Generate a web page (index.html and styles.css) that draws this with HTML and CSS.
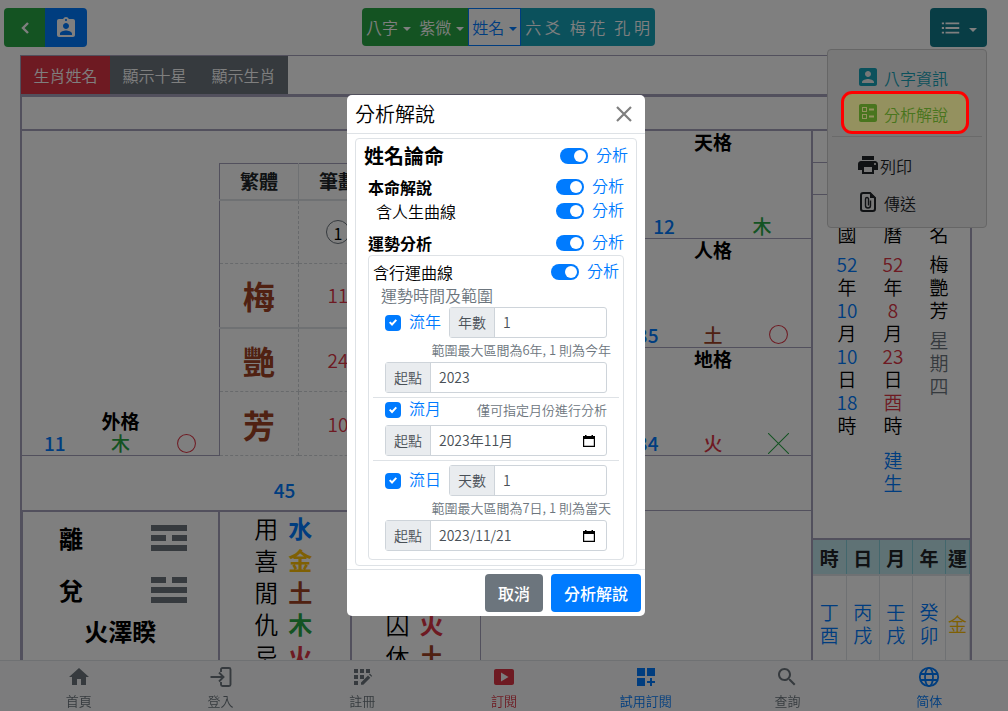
FILE: index.html
```html
<!DOCTYPE html>
<html lang="zh-Hant">
<head>
<meta charset="utf-8">
<meta name="viewport" content="width=device-width, initial-scale=1">
<title>分析解說</title>
<link rel="stylesheet" href="styles.css">
</head>
<body>
<header class="topbar">
  <div class="group tall">
    <button class="btn-back" type="button" aria-label="返回"><svg class="icon" viewBox="0 0 24 24"><path d="M15 7l-5 5 5 5" fill="none" stroke="currentColor" stroke-width="2.4"/></svg></button>
    <button class="btn-badge" type="button" aria-label="個人資料"><svg class="icon" viewBox="0 0 24 24"><path d="M19 3h-4.18C14.4 1.84 13.3 1 12 1c-1.3 0-2.4.84-2.82 2H5c-1.1 0-2 .9-2 2v14c0 1.1.9 2 2 2h14c1.1 0 2-.9 2-2V5c0-1.1-.9-2-2-2zm-7 0c.55 0 1 .45 1 1s-.45 1-1 1-1-.45-1-1 .45-1 1-1zm0 4c1.66 0 3 1.34 3 3s-1.34 3-3 3-3-1.34-3-3 1.34-3 3-3zm6 12H6v-1.4c0-2 4-3.1 6-3.1s6 1.1 6 3.1V19z"/></svg></button>
  </div>
  <nav class="group methods">
    <button class="m-green" type="button">八字<i class="caret"></i></button>
    <button class="m-green" type="button">紫微<i class="caret"></i></button>
    <button class="m-active" type="button">姓名<i class="caret"></i></button>
    <button class="m-info" type="button">六 爻</button>
    <button class="m-info" type="button">梅 花</button>
    <button class="m-info" type="button">孔 明</button>
  </nav>
  <div class="dropdown">
    <button class="btn-menu" type="button" aria-label="選單"><svg class="icon" viewBox="0 0 24 24"><path d="M2 6h2.4v2H2zM6 6h15v2H6zM2 11h2.4v2H2zM6 11h15v2H6zM2 16h2.4v2H2zM6 16h15v2H6z"/></svg><i class="caret"></i></button>
    <div class="menu">
      <a class="menu-item info" href="#"><svg class="icon" viewBox="0 0 24 24"><path d="M3 5v14c0 1.1.89 2 2 2h14c1.1 0 2-.9 2-2V5c0-1.1-.9-2-2-2H5c-1.11 0-2 .9-2 2zm12 4c0 1.66-1.34 3-3 3s-3-1.34-3-3 1.34-3 3-3 3 1.34 3 3zm-9 8c0-2 4-3.1 6-3.1s6 1.1 6 3.1v1H6v-1z"/></svg><span>八字資訊</span></a>
      <a class="menu-item success" href="#"><svg class="icon" viewBox="0 0 24 24"><path d="M13 9.5h5v-2h-5v2zm0 7h5v-2h-5v2zm6 4.5H5c-1.1 0-2-.9-2-2V5c0-1.1.9-2 2-2h14c1.1 0 2 .9 2 2v14c0 1.1-.9 2-2 2zM6 11h5V6H6v5zm1-4h3v3H7V7zM6 18h5v-5H6v5zm1-4h3v3H7v-3z"/></svg><span>分析解說</span></a>
      <hr>
      <a class="menu-item plain print" href="#"><svg class="icon" viewBox="0 0 24 24"><path d="M19 8H5c-1.66 0-3 1.34-3 3v6h4v4h12v-4h4v-6c0-1.66-1.34-3-3-3zm-3 11H8v-5h8v5zm3-7c-.55 0-1-.45-1-1s.45-1 1-1 1 .45 1 1-.45 1-1 1zm-1-9H6v4h12V3z"/></svg><span>列印</span></a>
      <a class="menu-item plain" href="#"><svg class="icon" viewBox="0 0 24 24"><path d="M14 3H7.2C6 3 5 4 5 5.200v13.600C5 20 6 21 7.200 21h9.600c1.200 0 2.200-1 2.200-2.200V8z" fill="none" stroke="currentColor" stroke-width="2"/><path d="M14 2v6h6z"/><path d="M14.500 10.500v5a2.500 2.500 0 0 1-5 0V9a1.500 1.500 0 0 1 3 0v6.500" fill="none" stroke="currentColor" stroke-width="1.400"/></svg><span>傳送</span></a>
    </div>
  </div>
</header>

<main class="frame">
  <div class="tabs">
    <button class="tab on" type="button">生肖姓名</button>
    <button class="tab" type="button">顯示十星</button>
    <button class="tab" type="button">顯示生肖</button>
  </div>
  <div class="strip"></div>
  <div class="board">
    <section class="left">
      <div class="upper">
        <div class="cell outer">
          <h2>外格</h2>
          <div class="vals"><b class="blue">11</b><b class="green">木</b><span class="mark"><svg viewBox="0 0 20 20"><circle cx="10" cy="10" r="8.500" fill="none" stroke="#dc3545"/></svg></span></div>
        </div>
        <table class="names">
          <thead><tr><th>繁體</th><th>筆劃</th><th></th><th></th><th></th></tr></thead>
          <tbody>
            <tr><td></td><td><span class="ring">1</span></td><td></td><td></td><td></td></tr>
            <tr class="mid"><td class="name">梅</td><td class="red">11</td><td></td><td></td><td></td></tr>
            <tr><td class="name">艷</td><td class="red">24</td><td></td><td></td><td></td></tr>
            <tr><td class="name">芳</td><td class="red">10</td><td></td><td></td><td></td></tr>
          </tbody>
        </table>
        <div class="stack">
          <div class="cell"><h2>天格</h2><div class="vals"><b class="blue">12</b><b class="green">木</b></div></div>
          <div class="cell"><h2>人格</h2><div class="vals"><b class="blue">35</b><b class="brown">土</b><span class="mark"><svg viewBox="0 0 20 20"><circle cx="10" cy="10" r="8.500" fill="none" stroke="#dc3545"/></svg></span></div></div>
          <div class="cell"><h2>地格</h2><div class="vals"><b class="blue">34</b><b class="red">火</b><span class="mark"><svg viewBox="0 0 20 20"><path d="M0 0L20 20M20 0L0 20" stroke="#28a745"/></svg></span></div></div>
        </div>
      </div>
      <div class="total"><b class="blue">45</b></div>
      <div class="lower">
        <div class="hexagram">
          <div class="gua"><b>離</b><svg viewBox="0 0 36 26"><path d="M0 0h36v6H0zM0 10h15v6H0zM21 10h15v6H21zM0 20h36v6H0z"/></svg></div>
          <div class="gua"><b>兌</b><svg viewBox="0 0 36 26"><path d="M0 0h15v6H0zM21 0h15v6H21zM0 10h36v6H0zM0 20h36v6H0z"/></svg></div>
          <b class="gua-name">火澤睽</b>
        </div>
        <div class="pairs">
          <div><span>用</span><b class="blue">水</b></div>
          <div><span>喜</span><b class="gold">金</b></div>
          <div><span>閒</span><b class="brown">土</b></div>
          <div><span>仇</span><b class="green">木</b></div>
          <div><span>忌</span><b class="red">火</b></div>
        </div>
        <div class="pairs last">
          <div><span>旺</span><b class="blue">水</b></div>
          <div><span>相</span><b class="green">木</b></div>
          <div><span>死</span><b class="gold">金</b></div>
          <div><span>囚</span><b class="red">火</b></div>
          <div><span>休</span><b class="brown">土</b></div>
        </div>
        <div class="rest"></div>
      </div>
    </section>
    <section class="right">
      <div class="line"></div>
      <div class="line"></div>
      <div class="dates">
        <p><span>民</span><span>國</span><span class="blue gap">52</span><span>年</span><span class="blue">10</span><span>月</span><span class="blue">10</span><span>日</span><span class="blue">18</span><span>時</span></p>
        <p><span>農</span><span>曆</span><span class="red gap">52</span><span>年</span><span class="red">8</span><span>月</span><span class="red">23</span><span>日</span><span class="red">酉</span><span>時</span><span class="blue gap born">建</span><span class="blue">生</span></p>
        <p><span>姓</span><span>名</span><span class="gap">梅</span><span>艷</span><span>芳</span><span class="gray gap">星</span><span class="gray">期</span><span class="gray">四</span></p>
      </div>
      <table class="pillars">
        <thead><tr><th>時</th><th>日</th><th>月</th><th>年</th><th class="luck">運</th></tr></thead>
        <tbody><tr><td>丁<br>酉</td><td>丙<br>戌</td><td>壬<br>戌</td><td>癸<br>卯</td><td class="gold">金</td></tr></tbody>
      </table>
    </section>
  </div>
</main>

<nav class="bottombar">
  <a href="#"><svg class="icon" viewBox="0 0 24 24"><path d="M10 20v-6h4v6h5v-8h3L12 3 2 12h3v8z"/></svg>首頁</a>
  <a href="#"><svg class="icon" viewBox="0 0 24 24"><path d="M12 7V4.500C12 3.700 12.700 3 13.500 3H20c.8 0 1.500.7 1.500 1.500v15c0 .8-.7 1.500-1.500 1.500h-6.500c-.8 0-1.500-.7-1.500-1.500V17M1.500 12H14M10 7.500l4.500 4.500-4.500 4.500" fill="none" stroke="currentColor" stroke-width="1.900"/></svg>登入</a>
  <a href="#"><svg class="icon" viewBox="0 0 24 24"><path d="M4 4h4v4H4zM10 4h4v4h-4zM16 4h4v4h-4zM4 10h4v4H4zM10 10h4v4h-4zM4 16h4v4H4zM11 17.500l7-7 2.300 2.300-7 7H11zM19 9.500l.9-.9 2.300 2.300-.9.9z"/></svg>註冊</a>
  <a href="#" class="red"><svg class="icon" viewBox="0 0 24 24"><path fill-rule="evenodd" d="M4 4h16c1.100 0 2 .9 2 2v12c0 1.100-.9 2-2 2H4c-1.100 0-2-.9-2-2V6c0-1.100.9-2 2-2zm5 3.500v9l7.500-4.500z"/></svg>訂閱</a>
  <a href="#" class="blue"><svg class="icon" viewBox="0 0 24 24"><path d="M3 3h8v8H3zM13 3h8v8h-8zM3 13h8v8H3zM16 13h2v3h3v2h-3v3h-2v-3h-3v-2h3z"/></svg>試用訂閱</a>
  <a href="#"><svg class="icon" viewBox="0 0 24 24"><path d="M15.500 14h-.79l-.28-.27C15.410 12.590 16 11.110 16 9.500 16 5.910 13.090 3 9.500 3S3 5.910 3 9.500 5.910 16 9.500 16c1.610 0 3.090-.59 4.230-1.570l.27.28v.79l5 4.990L20.490 19l-4.990-5zm-6 0C7.010 14 5 11.990 5 9.500S7.010 5 9.500 5 14 7.010 14 9.500 11.990 14 9.500 14z"/></svg>查詢</a>
  <a href="#" class="blue"><svg class="icon" viewBox="0 0 24 24"><g fill="none" stroke="currentColor" stroke-width="1.800"><circle cx="12" cy="12" r="9.200"/><ellipse cx="12" cy="12" rx="4" ry="9.200"/><path d="M3.500 9h17M3.500 15h17"/></g></svg>简体</a>
</nav>

<div class="backdrop">
  <section class="modal" role="dialog" aria-labelledby="modal-title">
    <header class="modal-head">
      <h1 id="modal-title">分析解說</h1>
      <button class="close" type="button" aria-label="關閉"><svg viewBox="0 0 18 18"><path d="M2 2l14 14M16 2L2 16" stroke="currentColor" stroke-width="2.200"/></svg></button>
    </header>
    <div class="modal-body">
      <div class="box">
        <div class="row lead"><strong>姓名論命</strong><label class="toggle"><input type="checkbox" checked><span>分析</span></label></div>
        <div class="row"><strong>本命解說</strong><label class="toggle"><input type="checkbox" checked><span>分析</span></label></div>
        <div class="row sub"><span>含人生曲線</span><label class="toggle"><input type="checkbox" checked><span>分析</span></label></div>
        <div class="row spaced"><strong>運勢分析</strong><label class="toggle"><input type="checkbox" checked><span>分析</span></label></div>
        <div class="inner">
          <div class="row"><span>含行運曲線</span><label class="toggle"><input type="checkbox" checked><span>分析</span></label></div>
          <div class="range-title">運勢時間及範圍</div>
          <div class="period">
            <label class="check"><input type="checkbox" checked><span>流年</span></label>
            <div class="field"><label for="years">年數</label><input id="years" type="text" value="1"></div>
          </div>
          <small class="help">範圍最大區間為6年, 1 則為今年</small>
          <div class="field full"><label for="y-start">起點</label><input id="y-start" type="text" value="2023"></div>
          <hr class="tight">
          <div class="period month">
            <label class="check"><input type="checkbox" checked><span>流月</span></label>
            <small>僅可指定月份進行分析</small>
          </div>
          <div class="field full"><label for="m-start">起點</label><input id="m-start" type="text" value="2023年11月"><button class="pick" type="button" aria-label="選擇月份"><svg viewBox="0 0 12 12"><path fill-rule="evenodd" d="M2 0h1.500v1h5V0H10v1h2v11H0V1h2zM1.200 4v6.800h9.600V4z"/></svg></button></div>
          <hr>
          <div class="period">
            <label class="check"><input type="checkbox" checked><span>流日</span></label>
            <div class="field"><label for="days">天數</label><input id="days" type="text" value="1"></div>
          </div>
          <small class="help">範圍最大區間為7日, 1 則為當天</small>
          <div class="field full"><label for="d-start">起點</label><input id="d-start" type="text" value="2023/11/21"><button class="pick" type="button" aria-label="選擇日期"><svg viewBox="0 0 12 12"><path fill-rule="evenodd" d="M2 0h1.500v1h5V0H10v1h2v11H0V1h2zM1.200 4v6.800h9.600V4z"/></svg></button></div>
        </div>
      </div>
    </div>
    <footer class="modal-foot">
      <button class="btn cancel" type="button">取消</button>
      <button class="btn primary" type="button">分析解說</button>
    </footer>
  </section>
</div>
<div class="highlight"></div>
</body>
</html>
```

FILE: styles.css
```css
:root {
  --line: #a5a0bb;
  --blue: #007bff;
  --green: #28a745;
  --red: #dc3545;
  --brown: #a04224;
  --gold: #ffc107;
  --gray: #6c757d;
  --soft: #dee2e6;
}

* { box-sizing: border-box; }

body {
  margin: 0;
  height: 100vh;
  overflow: hidden;
  background: #fff;
  color: #000;
  font: 350 16px/24px "Noto Sans CJK TC", sans-serif;
}

button, input { font: inherit; color: inherit; }
button { border: 0; padding: 0; cursor: pointer; }
a { color: inherit; text-decoration: none; }
h1, h2, p { margin: 0; }
b { font-weight: 700; }
hr { border: 0; border-top: 1px solid var(--soft); margin: 0; }

.icon { width: 24px; height: 24px; fill: currentColor; display: block; }
.blue { color: var(--blue); }
.green { color: var(--green); }
.red { color: var(--red); }
.brown { color: var(--brown); }
.gold { color: var(--gold); }
.gray { color: var(--gray); }

.caret {
  display: inline-block;
  margin-left: 5px;
  border: 4px solid transparent;
  border-top-color: currentColor;
  border-bottom: 0;
  vertical-align: 3px;
}

/* top bar */
.topbar {
  display: flex;
  justify-content: space-between;
  align-items: flex-start;
  padding: 8px 21px 8px 4px;
}
.group { display: flex; border-radius: 4px; overflow: hidden; color: #fff; }
.group.tall { height: 39px; }
.group.tall button { display: grid; place-items: center; width: 41px; color: #fff; }
.group.tall .btn-back { background: var(--green); }
.group.tall .btn-badge { background: var(--blue); width: 42px; }
.methods button { height: 38px; padding: 0 4px; color: #fff; white-space: nowrap; }
.methods .m-green { background: var(--green); }
.methods .m-active { background: #fff; color: var(--blue); border: 1px solid var(--blue); padding: 0 3px; }
.methods .m-info { background: #17a2b8; padding: 0 5px 0 4px; }

.dropdown { position: relative; }
.btn-menu {
  display: flex;
  align-items: center;
  justify-content: center;
  width: 57px;
  height: 39px;
  border-radius: 4px;
  background: #117a8b;
  color: #fff;
}
.btn-menu .icon { width: 22px; }
.btn-menu .caret { margin: 5px 0 0 7px; }
.menu {
  position: absolute;
  top: 41px;
  right: 0;
  z-index: 5;
  width: 160px;
  padding: 9px 4px 7px;
  background: #f1f1f1;
  border: 1px solid #ccc;
  border-radius: 4px;
}
.menu-item { display: flex; align-items: center; gap: 4px; height: 37px; padding-left: 24px; }
.menu-item span { padding-top: 2px; }
.menu-item.print { gap: 0; }
.menu-item.info, .menu-item.success { height: 36px; }
.menu .info { color: #17a2b8; }
.menu .success { color: var(--green); }
.menu .plain { color: #212529; }
.menu hr { margin: 5px 0 9px; border-color: #d5d5d5; }

/* name chart */
.frame { margin: 0 36px 0 20px; border-top: 1px solid var(--line); }
.tabs { display: flex; border-left: 1px solid var(--line); }
.tab { height: 38px; padding: 0 12px; min-width: 89px; background: var(--gray); color: #fff; }
.tab.on { background: var(--red); }
.strip {
  height: 37px;
  border: solid var(--line);
  border-width: 3px 0 2px 2px;
}
.board { display: grid; grid-template-columns: 1fr 161px; }
.left { border-left: 2px solid var(--line); }
.upper { display: grid; grid-template-columns: 197fr 396fr 196fr; min-height: 325px; }
.cell {
  display: flex;
  flex-direction: column;
  justify-content: space-between;
  padding-bottom: 1px;
  border-bottom: 1px solid var(--line);
  font-size: 19px;
  line-height: 22px;
  text-align: center;
}
.cell.outer { justify-content: flex-end; }
.cell h2 { font-size: 19px; font-weight: 700; line-height: 22px; }
.vals { display: grid; grid-auto-flow: column; grid-auto-columns: 1fr; align-items: center; }
.vals b, .total b { font-weight: 500; }
.mark { display: grid; place-items: center; }
.mark svg { width: 21px; height: 21px; }
.stack { display: grid; grid-template-rows: repeat(3, 1fr); }

.names {
  table-layout: fixed;
  width: 100%;
  margin-top: 32px;
  border-collapse: collapse;
  border: solid var(--line);
  border-width: 1px 0 0 1px;
  font-size: 19px;
  text-align: center;
}
.names th { height: 36px; padding: 0; color: #212529; border-right: 1px solid var(--soft); border-bottom: 2px solid var(--soft); }
.names td { height: 64px; padding: 0; border-right: 1px dashed #d0d4d8; border-bottom: 1px dashed #d0d4d8; }
.names .mid td { border-bottom: 2px solid var(--soft); }
.names .name { font-size: 32px; line-height: 40px; font-weight: 700; color: var(--brown); }
.ring {
  display: inline-grid;
  place-items: center;
  width: 24px;
  height: 24px;
  border: 1px solid var(--gray);
  border-radius: 50%;
  font-size: 16px;
  font-weight: 400;
}

.total {
  display: grid;
  place-items: end center;
  width: 131px;
  height: 54px;
  margin-left: 197px;
  padding-bottom: 8px;
  font-size: 19px;
}
.lower { display: grid; grid-template-columns: 198fr 132fr 130fr 330fr; font-size: 24px; }
.lower > div { border-top: 2px solid var(--line); border-right: 2px solid var(--line); min-height: 190px; }
.lower .last { border-right-width: 1px; }
.lower .rest { border-top-width: 1px; border-right: 0; }
.lower .hexagram {
  border-left: 1px solid var(--line);
  display: flex;
  flex-direction: column;
  align-items: center;
}
.gua { display: flex; align-items: center; justify-content: space-between; align-self: stretch; height: 52px; padding: 0 31px 0 36px; }
.gua svg { width: 36px; height: 26px; fill: var(--gray); }
.gua-name { line-height: 30px; }
.pairs > div { display: flex; justify-content: center; gap: 10px; line-height: 32px; padding-right: 3px; }

.right { border: solid var(--line); border-width: 0 2px; }
.line { height: 32px; border-bottom: 1px solid var(--line); }
.dates {
  display: grid;
  grid-template-columns: repeat(3, 46px);
  justify-content: center;
  min-height: 343px;
  padding: 4px 0 0 3px;
  font-size: 19px;
  line-height: 23px;
  text-align: center;
}
.dates span { display: block; }
.dates .gap { margin-top: 7px; }
.dates .born { margin-top: 12px; }
.pillars {
  table-layout: fixed;
  width: 100%;
  border-collapse: collapse;
  border-top: 2px solid var(--line);
  font-size: 19px;
  line-height: 23px;
  text-align: center;
}
.pillars th { height: 36px; padding: 0; background: #bee5eb; color: #212529; border-right: 1px solid #86cfda; border-bottom: 2px solid var(--soft); }
.pillars td { height: 95px; padding: 0; border-right: 1px solid var(--soft); color: var(--blue); }
.pillars td.gold { color: var(--gold); }
.pillars .luck { width: 24px; }

/* bottom bar */
.bottombar {
  position: fixed;
  inset: auto 0 0;
  display: grid;
  grid-template-columns: repeat(7, 1fr);
  height: 51px;
  padding: 4px 8px 0;
  background: #f8f9fa;
  border-top: 1px solid var(--soft);
  font-size: 13px;
  line-height: 24px;
}
.bottombar a { display: flex; flex-direction: column; align-items: center; color: var(--gray); }
.bottombar a.red { color: var(--red); }
.bottombar a.blue { color: var(--blue); }

/* modal */
.backdrop {
  position: fixed;
  inset: 0;
  z-index: 10;
  display: grid;
  place-items: center;
  padding-right: 16px;
  background: rgba(0, 0, 0, .5);
}
.modal {
  width: 298px;
  background: #fff;
  border-radius: 5px;
}
.modal-head {
  display: flex;
  justify-content: space-between;
  align-items: center;
  height: 39px;
  padding: 0 12px 0 8px;
  border-bottom: 1px solid var(--soft);
}
.modal-head h1 { font-size: 20px; font-weight: 350; line-height: 30px; }
.close { display: grid; background: none; color: #7f7f7f; }
.close svg { width: 18px; height: 18px; }
.modal-body { padding: 4px 8px 3px; }
.box { border: 1px solid var(--soft); border-radius: 4px; padding: 0 12px 5px; }
.row { display: flex; justify-content: space-between; align-items: center; height: 24px; white-space: nowrap; }
.row.lead { height: 33px; margin: 0 -4px 3px; font-size: 20px; }
.row.sub { padding-left: 8px; }
.row.spaced { margin-top: 8px; }
.row strong { font-weight: 700; }
.toggle { display: flex; align-items: center; gap: 8px; font-size: 16px; color: var(--blue); }
.toggle span, .check span { padding-bottom: 4px; }
.toggle input {
  appearance: none;
  width: 28px;
  height: 16px;
  margin: 0;
  border-radius: 8px;
  background: var(--blue);
}
.toggle input::before {
  content: "";
  display: block;
  width: 12px;
  height: 12px;
  margin: 2px 2px 2px 14px;
  border-radius: 50%;
  background: #fff;
}
.inner { border: 1px solid var(--soft); border-radius: 4px; padding: 4px 4px 8px; }
.inner .row { height: 23px; }
.inner hr { margin: 4px 0; }
.inner hr.tight { margin-bottom: 0; }
.range-title { padding-left: 8px; line-height: 24px; color: var(--gray); }
.period { display: flex; align-items: center; justify-content: space-between; padding: 0 12px; }
.period.month { height: 24px; margin-bottom: 3px; }
.check { display: flex; align-items: center; gap: 8px; color: var(--blue); }
.check input {
  appearance: none;
  width: 16px;
  height: 16px;
  margin: 0;
  border-radius: 4px;
  background: var(--blue);
}
.check input::before {
  content: "";
  display: block;
  width: 8px;
  height: 8px;
  margin: 4px;
  background: #fff;
  clip-path: polygon(0 52%, 16% 36%, 38% 56%, 82% 8%, 100% 24%, 38% 94%);
}
small { font-size: 13px; line-height: 24px; color: var(--gray); }
.help { display: block; padding-right: 8px; text-align: right; white-space: nowrap; }
.field {
  display: flex;
  align-items: stretch;
  width: 158px;
  height: 31px;
  border: 1px solid #ced4da;
  border-radius: 3px;
  font-size: 14px;
  line-height: 29px;
  color: #495057;
}
.field.full { width: auto; margin: 0 12px; }
.field label { padding: 0 8px; background: #e9ecef; border-right: 1px solid #ced4da; }
.field input { flex: 1; min-width: 0; padding: 0 8px; border: 0; background: none; }
.pick { display: grid; place-items: center; width: 34px; background: none; color: #000; }
.pick svg { width: 12px; height: 12px; fill: currentColor; }
.modal-foot { display: flex; justify-content: flex-end; gap: 8px; padding: 4px; border-top: 1px solid var(--soft); }
.btn { height: 38px; padding: 0 13px; border-radius: 4px; color: #fff; font-weight: 500; }
.cancel { background: var(--gray); }
.primary { background: var(--blue); }

/* marker around the chosen menu entry */
.highlight {
  position: absolute;
  top: 91px;
  right: 39px;
  z-index: 20;
  width: 128px;
  height: 43px;
  border: 3px solid #f00;
  border-radius: 11px;
  background: rgba(232, 218, 20, .25);
}
```
